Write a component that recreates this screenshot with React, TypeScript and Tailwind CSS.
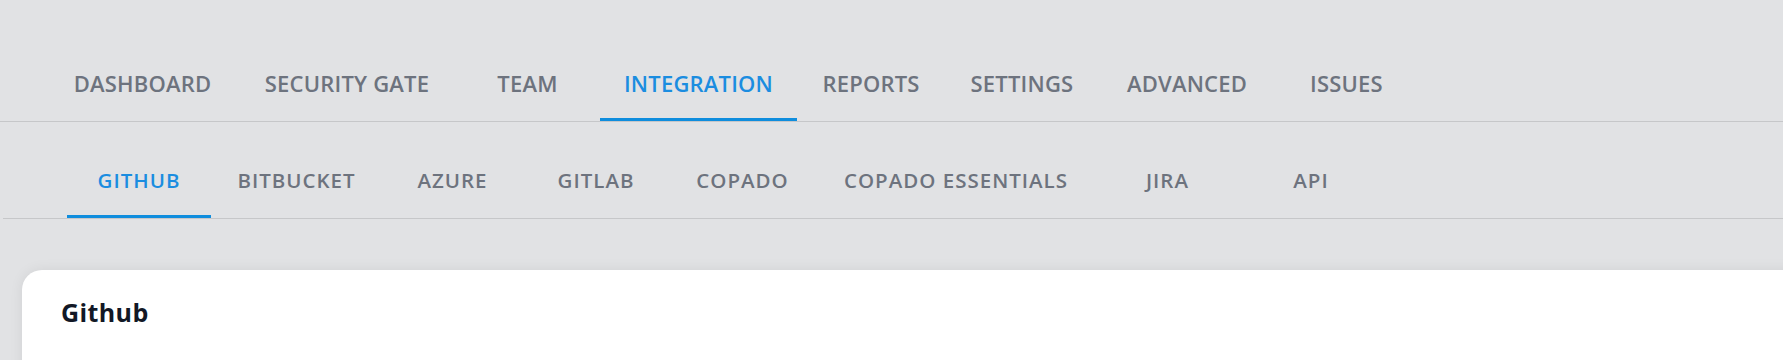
import React from "react";

const mainTabs = [
  { label: "DASHBOARD", width: "w-[193px]" },
  { label: "SECURITY GATE", width: "w-[216px]" },
  { label: "TEAM", width: "w-[145px]" },
  { label: "INTEGRATION", width: "w-[197px]", active: true },
  { label: "REPORTS", width: "w-[148px]" },
  { label: "SETTINGS", width: "w-[154px]" },
  { label: "ADVANCED", width: "w-[176px]" },
  { label: "ISSUES", width: "w-[143px]" },
];

const subTabs = [
  { label: "GITHUB", width: "w-[144px]", active: true },
  { label: "BITBUCKET", width: "w-[171px]" },
  { label: "AZURE", width: "w-[141px]" },
  { label: "GITLAB", width: "w-[146px]" },
  { label: "COPADO", width: "w-[147px]" },
  { label: "COPADO ESSENTIALS", width: "w-[280px]" },
  { label: "JIRA", width: "w-[143px]" },
  { label: "API", width: "w-[144px]" },
];

function Tab({
  label,
  width,
  active,
  size,
}: {
  label: string;
  width: string;
  active?: boolean;
  size: string;
}) {
  return (
    <button
      type="button"
      className={[
        "flex h-[76px] shrink-0 items-center justify-center whitespace-nowrap border-y-[3px] border-t-transparent font-[540]",
        width,
        size,
        active
          ? "border-b-[#0f8ddd] text-[#1b8de0]"
          : "border-b-transparent text-[#6d737e]",
      ].join(" ")}
    >
      {label}
    </button>
  );
}

export default function App() {
  return (
    <div
      className="h-[360px] w-full overflow-hidden bg-[#e1e2e4]"
      style={{ fontFamily: '"Open Sans", "Noto Sans", sans-serif' }}
    >
      <nav className="flex border-b border-[#c6c7c9] pl-[46px] pt-[45px]">
        {mainTabs.map((t) => (
          <Tab key={t.label} {...t} size="text-[22px] tracking-[0.2px]" />
        ))}
      </nav>

      <nav className="ml-[3px] flex border-b border-[#c6c7c9] pl-[64px] pt-[20px]">
        {subTabs.map((t) => (
          <Tab key={t.label} {...t} size="text-[20.5px] tracking-[1px]" />
        ))}
      </nav>

      <section className="ml-[22px] mr-[-40px] mt-[51px] h-[200px] rounded-[20px] bg-white pl-[39px] pt-[24px] shadow-[0_0_14px_rgba(0,0,0,0.07)]">
        <h2 className="text-[25px] font-bold leading-[36px] tracking-[0.4px] text-[#121826]">
          Github
        </h2>
      </section>
    </div>
  );
}
